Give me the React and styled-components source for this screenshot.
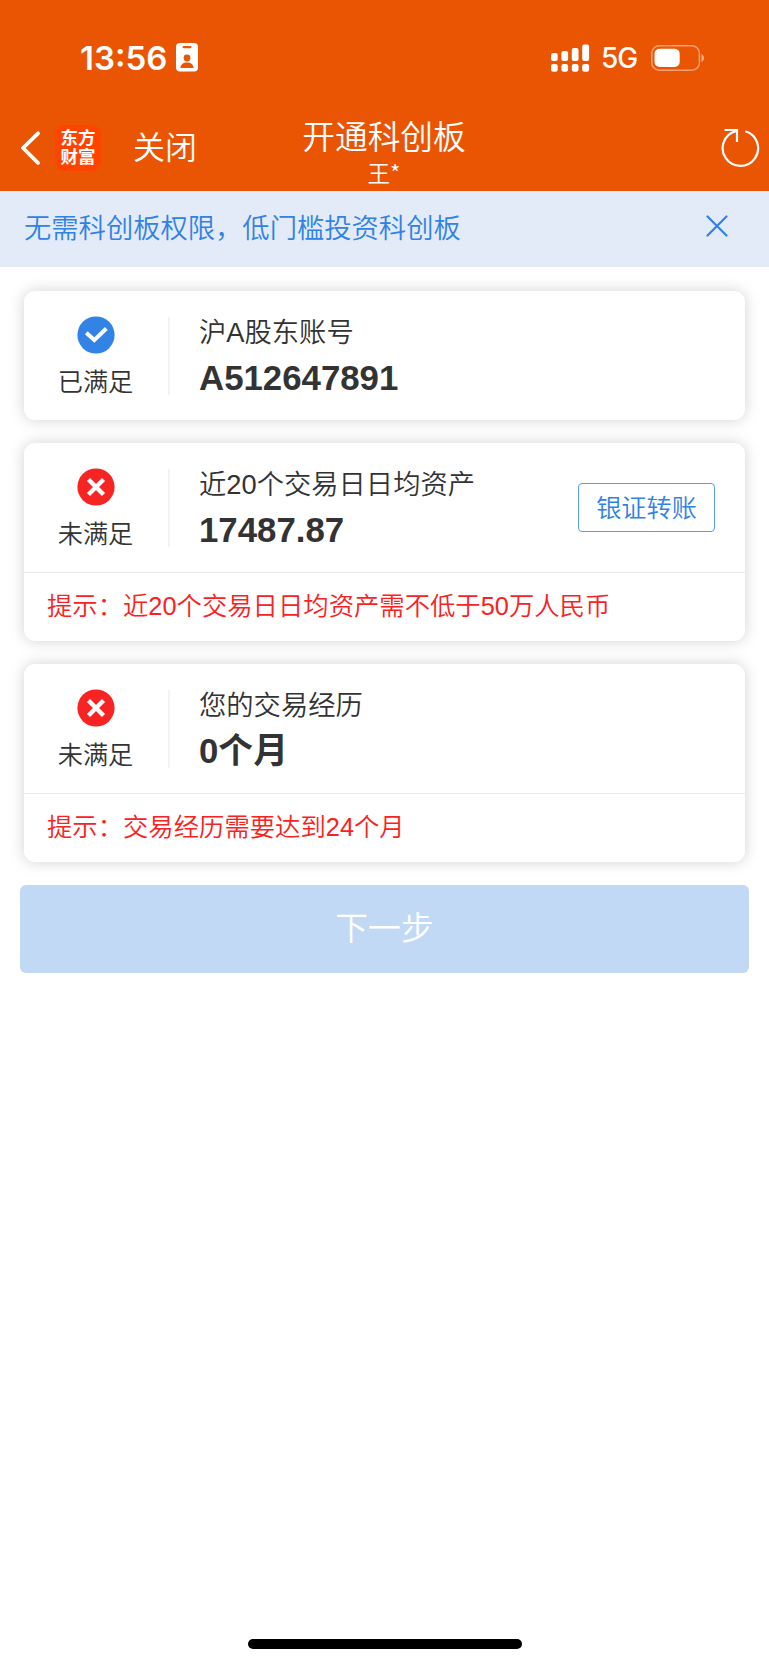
import styled, { createGlobalStyle } from "styled-components";

const GlobalStyle = createGlobalStyle`
  * {
    box-sizing: border-box;
  }

  body {
    margin: 0;
    background: #fff;
    color: #333;
    font-family: "Liberation Sans", "Noto Sans CJK SC", sans-serif;
    font-weight: 350;
  }
`;

const Screen = styled.div`
  width: 100%;
  min-height: 1665px;
  display: flex;
  flex-direction: column;
  background: #fff;
`;

const Header = styled.header`
  height: 191px;
  background: #ea5504;
  color: #fff;
`;

const StatusBar = styled.div`
  height: 115px;
  padding: 0 64px 0 80px;
  display: flex;
  align-items: center;
  justify-content: space-between;
`;

const StatusGroup = styled.div`
  display: flex;
  align-items: center;
`;

const Time = styled.span`
  width: 96px;
  font-family: Inter, sans-serif;
  font-size: 33px;
  font-weight: 600;
  line-height: 40px;
`;

const Network = styled.span`
  width: 49px;
  padding-top: 1px;
  margin-left: 11px;
  margin-right: 1px;
  font-family: Inter, sans-serif;
  font-size: 28px;
  font-weight: 500;
  line-height: 40px;
  letter-spacing: -1px;
`;

const NavBar = styled.nav`
  height: 76px;
  display: grid;
  grid-template-columns: 1fr auto 1fr;
`;

const NavLeft = styled.div`
  height: 66px;
  padding-left: 20px;
  display: flex;
  align-items: center;
`;

const NavRight = styled.div`
  height: 66px;
  padding-right: 8px;
  display: flex;
  align-items: center;
  justify-content: flex-end;
`;

const AppLogo = styled.div`
  width: 46px;
  height: 46px;
  margin-left: 14px;
  border-radius: 9px;
  background: #ff4400;
  display: flex;
  flex-direction: column;
  align-items: center;
  justify-content: center;
  font-size: 17.5px;
  font-weight: 700;
  line-height: 19px;
`;

const CloseText = styled.span`
  margin-left: 32px;
  font-size: 32px;
  line-height: 40px;
`;

const NavTitle = styled.div`
  padding-right: 1px;
  display: flex;
  flex-direction: column;
  align-items: center;
`;

const Title = styled.h1`
  margin: 0;
  font-size: 32.7px;
  font-weight: inherit;
  line-height: 45px;
`;

const SubTitle = styled.span`
  font-family: "Noto Sans CJK SC", sans-serif;
  font-size: 22.5px;
  line-height: 24px;
`;

const Notice = styled.div`
  height: 76px;
  padding: 0 41px 0 24px;
  display: flex;
  align-items: center;
  justify-content: space-between;
  background: #e4ebf8;
  color: #3082e5;
  font-size: 27.3px;
  line-height: 76px;

  svg {
    margin-bottom: 6px;
  }
`;

const CardList = styled.main`
  padding: 24px 24px 0;
  display: flex;
  flex-direction: column;
  gap: 23px;
`;

const Card = styled.section`
  border-radius: 11px;
  background: #fff;
  box-shadow: 0 0 15px rgba(0, 0, 0, 0.18);
`;

const CardBody = styled.div`
  height: 129px;
  padding-right: 30px;
  display: flex;
  align-items: center;
`;

const Status = styled.div`
  width: 146px;
  height: 78px;
  padding: 0 1px 0 0;
  border-right: 2px solid #f3f3f3;
  display: flex;
  flex-direction: column;
  align-items: center;
  font-size: 25.2px;
  line-height: 36px;

  svg {
    margin: -1px 0 10px;
    flex-shrink: 0;
  }
`;

const Info = styled.div`
  flex: 1;
  padding-left: 29px;
`;

const InfoLabel = styled.div`
  font-size: 27.3px;
  line-height: 44px;
`;

const InfoValue = styled.div`
  font-size: 34.8px;
  font-weight: 700;
  line-height: 46px;
`;

const TransferButton = styled.button`
  width: 137px;
  height: 49px;
  padding: 0 0 3px;
  border: 1.5px solid #5b9df0;
  border-radius: 4px;
  background: #fff;
  color: #3082e5;
  font: inherit;
  font-size: 25.2px;
`;

const Tip = styled.div`
  height: 69px;
  padding-left: 23px;
  border-top: 1px solid #eaeaea;
  color: #f92222;
  font-size: 25.35px;
  line-height: 66px;
`;

const NextButton = styled.button`
  height: 88px;
  margin: 23px 20px 0;
  padding: 0 0 7px;
  border: 0;
  border-radius: 6px;
  background: #c2d9f6;
  color: #fff;
  font: inherit;
  font-size: 32.8px;
`;

const HomeIndicator = styled.div`
  width: 274px;
  height: 10px;
  margin: auto auto 16px;
  border-radius: 5px;
  background: #000;
`;

const IdCardIcon = () => (
  <svg width="22" height="29" viewBox="0 0 22 29">
    <rect width="22" height="28.5" rx="4" fill="#fff" />
    <rect x="6.5" y="3" width="9" height="2.2" rx="1.1" fill="#ea5504" />
    <circle cx="11" cy="15" r="3.4" fill="#ea5504" />
    <path d="M4.3 25c.4-3.7 2.7-5.6 6.7-5.6s6.3 1.9 6.7 5.6z" fill="#ea5504" />
  </svg>
);

const SignalIcon = () => (
  <svg width="39" height="28" viewBox="0 0 39 28" fill="#fff">
    <rect x="0" y="9" width="6.7" height="8" rx="2" />
    <rect x="10.4" y="7" width="6.7" height="10" rx="2" />
    <rect x="20.8" y="4" width="6.7" height="13" rx="2" />
    <rect x="31.2" y="0.5" width="6.9" height="16.5" rx="2" />
    <rect x="0" y="20" width="6.7" height="7.7" rx="2.2" />
    <rect x="10.4" y="20" width="6.7" height="7.7" rx="2.2" />
    <rect x="20.8" y="20" width="6.7" height="7.7" rx="2.2" />
    <rect x="31.2" y="20" width="6.9" height="7.7" rx="2.2" />
  </svg>
);

const BatteryIcon = () => (
  <svg width="54" height="26" viewBox="0 0 54 26">
    <rect x="0.8" y="0.8" width="47.6" height="24.4" rx="7.5" fill="none" stroke="#fff" strokeOpacity="0.45" strokeWidth="1.5" />
    <rect x="3.5" y="3.8" width="25.2" height="18.2" rx="5" fill="#fff" />
    <path d="M50.5 9v8c3.4-1.4 3.4-6.6 0-8z" fill="#fff" fillOpacity="0.5" />
  </svg>
);

const BackIcon = () => (
  <svg width="21" height="34" viewBox="0 0 21 34" fill="none" stroke="#fff" strokeWidth="3.8" strokeLinecap="round" strokeLinejoin="round">
    <path d="M18 2.3L3 17l15 14.8" />
  </svg>
);

const RefreshIcon = () => (
  <svg width="40" height="40" viewBox="0 0 40 40" fill="none" stroke="#fff" strokeWidth="2.2">
    <path d="M24.3 3.2A17.7 17.7 0 1 1 14.8 3.1" />
    <path d="M3.5 2H16v12" />
  </svg>
);

const DismissIcon = () => (
  <svg width="22" height="22" viewBox="0 0 22 22" stroke="#3082e5" strokeWidth="2.2" strokeLinecap="round">
    <path d="M1.5 1.5l19 19M20.5 1.5l-19 19" />
  </svg>
);

const StatusIcon = ({ passed }) => (
  <svg width="38" height="38" viewBox="0 0 38 38" fill="none" stroke="#fff">
    <circle cx="19" cy="19" r="18.6" fill={passed ? "#3283e6" : "#f72424"} stroke="none" />
    {passed ? (
      <path d="M9.3 16.8l8 7.3L29.3 12.5" strokeWidth="4" />
    ) : (
      <path d="M11.5 11.5l15 15M26.5 11.5l-15 15" strokeWidth="4.4" />
    )}
  </svg>
);

const conditions = [
  { label: "沪A股东账号", value: "A512647891", passed: true },
  {
    label: "近20个交易日日均资产",
    value: "17487.87",
    action: "银证转账",
    tip: "近20个交易日日均资产需不低于50万人民币",
  },
  { label: "您的交易经历", value: "0个月", tip: "交易经历需要达到24个月" },
];

const App = () => {
  return (
    <Screen>
      <GlobalStyle />
      <Header>
        <StatusBar>
          <StatusGroup>
            <Time>13:56</Time>
            <IdCardIcon />
          </StatusGroup>
          <StatusGroup>
            <SignalIcon />
            <Network>5G</Network>
            <BatteryIcon />
          </StatusGroup>
        </StatusBar>
        <NavBar>
          <NavLeft>
            <BackIcon />
            <AppLogo>
              <span>东方</span>
              <span>财富</span>
            </AppLogo>
            <CloseText>关闭</CloseText>
          </NavLeft>
          <NavTitle>
            <Title>开通科创板</Title>
            <SubTitle>王*</SubTitle>
          </NavTitle>
          <NavRight>
            <RefreshIcon />
          </NavRight>
        </NavBar>
      </Header>

      <Notice>
        <span>无需科创板权限，低门槛投资科创板</span>
        <DismissIcon />
      </Notice>

      <CardList>
        {conditions.map((item) => (
          <Card key={item.label}>
            <CardBody>
              <Status>
                <StatusIcon passed={item.passed} />
                {item.passed ? "已满足" : "未满足"}
              </Status>
              <Info>
                <InfoLabel>{item.label}</InfoLabel>
                <InfoValue>{item.value}</InfoValue>
              </Info>
              {item.action && <TransferButton>{item.action}</TransferButton>}
            </CardBody>
            {item.tip && <Tip>提示：{item.tip}</Tip>}
          </Card>
        ))}
      </CardList>

      <NextButton disabled>下一步</NextButton>
      <HomeIndicator />
    </Screen>
  );
};

export default App;
